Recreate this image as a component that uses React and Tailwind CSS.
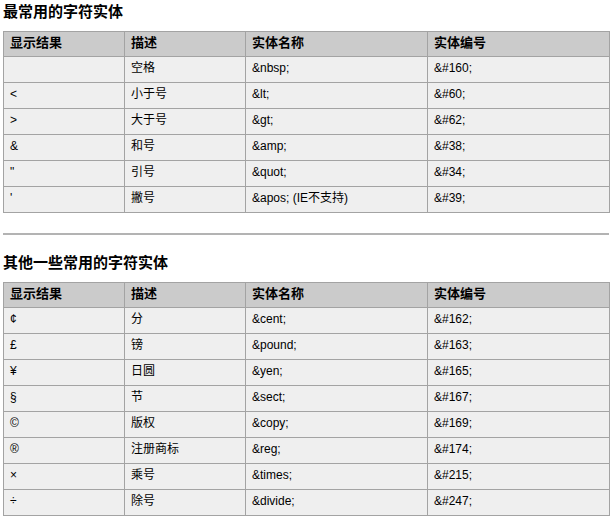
const FONT = '"Liberation Sans", "Noto Sans CJK SC", sans-serif';

const common = [
  ["\u00a0", "空格", "&nbsp;", "&#160;"],
  ["<", "小于号", "&lt;", "&#60;"],
  [">", "大于号", "&gt;", "&#62;"],
  ["&", "和号", "&amp;", "&#38;"],
  ['"', "引号", "&quot;", "&#34;"],
  ["'", "撇号", "&apos; (IE不支持)", "&#39;"],
];

const others = [
  ["¢", "分", "&cent;", "&#162;"],
  ["£", "镑", "&pound;", "&#163;"],
  ["¥", "日圆", "&yen;", "&#165;"],
  ["§", "节", "&sect;", "&#167;"],
  ["©", "版权", "&copy;", "&#169;"],
  ["®", "注册商标", "&reg;", "&#174;"],
  ["×", "乘号", "&times;", "&#215;"],
  ["÷", "除号", "&divide;", "&#247;"],
];

function EntityTable({ rows }) {
  const head = ["显示结果", "描述", "实体名称", "实体编号"];
  return (
    <table className="w-[606px] table-fixed border-collapse border border-[#999] text-[12px] leading-[16px] text-black">
      <colgroup>
        <col className="w-[121px]" />
        <col className="w-[121px]" />
        <col className="w-[182px]" />
        <col className="w-[182px]" />
      </colgroup>
      <thead>
        <tr className="h-[25px] bg-[#cbcbcb]">
          {head.map((h) => (
            <th
              key={h}
              className="border border-[#a3a3a3] px-[6px] pb-[2px] text-left align-middle text-[13px] font-bold"
            >
              {h}
            </th>
          ))}
        </tr>
      </thead>
      <tbody>
        {rows.map((r, i) => (
          <tr key={i} className="h-[26px] bg-[#efefef]">
            {r.map((c, j) => (
              <td
                key={j}
                className="border border-[#a3a3a3] px-[6px] pb-[3px] align-middle whitespace-nowrap"
              >
                {c}
              </td>
            ))}
          </tr>
        ))}
      </tbody>
    </table>
  );
}

export default function App() {
  return (
    <div className="w-[613px] h-[520px] bg-white pl-[3px]" style={{ fontFamily: FONT }}>
      <h2 className="pt-[3px] text-[15px] leading-[18px] font-bold mb-[10px]">最常用的字符实体</h2>
      <EntityTable rows={common} />
      <hr className="mt-[20px] w-[606px] border-0 h-[2px] bg-[#b3b3b3]" />
      <h2 className="pt-[19px] text-[15px] leading-[18px] font-bold mb-[10px]">其他一些常用的字符实体</h2>
      <EntityTable rows={others} />
    </div>
  );
}
